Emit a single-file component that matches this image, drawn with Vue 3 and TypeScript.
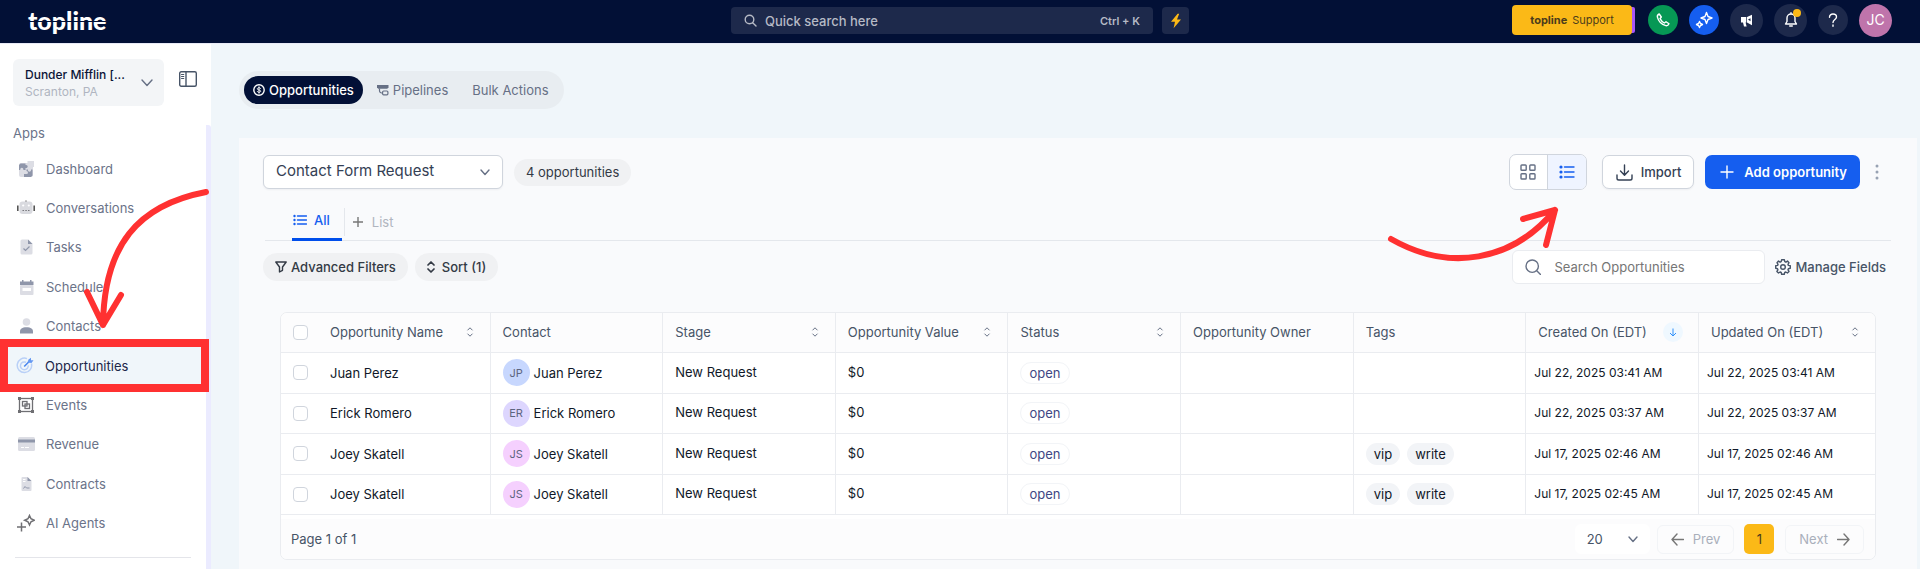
<script setup lang="ts">
import { ref } from 'vue'

interface NavItem { id: string; label: string }
interface Column { label: string; sort?: 'both' | 'down' }
interface Row { name: string; initials: string; tone: string; tags: string[]; date: string }

const nav: NavItem[] = [
  { id: 'dashboard', label: 'Dashboard' },
  { id: 'conversations', label: 'Conversations' },
  { id: 'tasks', label: 'Tasks' },
  { id: 'scheduler', label: 'Scheduler' },
  { id: 'contacts', label: 'Contacts' },
  { id: 'opportunities', label: 'Opportunities' },
  { id: 'events', label: 'Events' },
  { id: 'revenue', label: 'Revenue' },
  { id: 'contracts', label: 'Contracts' },
  { id: 'agents', label: 'AI Agents' },
]

const columns: Column[] = [
  { label: 'Contact' },
  { label: 'Stage', sort: 'both' },
  { label: 'Opportunity Value', sort: 'both' },
  { label: 'Status', sort: 'both' },
  { label: 'Opportunity Owner' },
  { label: 'Tags' },
  { label: 'Created On (EDT)', sort: 'down' },
  { label: 'Updated On (EDT)', sort: 'both' },
]

const rows: Row[] = [
  { name: 'Juan Perez', initials: 'JP', tone: 'blue', tags: [], date: 'Jul 22, 2025 03:41 AM' },
  { name: 'Erick Romero', initials: 'ER', tone: 'violet', tags: [], date: 'Jul 22, 2025 03:37 AM' },
  { name: 'Joey Skatell', initials: 'JS', tone: 'pink', tags: ['vip', 'write'], date: 'Jul 17, 2025 02:46 AM' },
  { name: 'Joey Skatell', initials: 'JS', tone: 'pink', tags: ['vip', 'write'], date: 'Jul 17, 2025 02:45 AM' },
]

const quick = ref('')
const query = ref('')
</script>

<template>
  <div class="app">
    <header class="topbar">
      <a class="logo" href="#">topline</a>
      <div class="top-center">
        <label class="quick">
          <svg width="13" height="13" viewBox="0 0 13 13" class="line"><circle cx="5.5" cy="5.5" r="4.3" /><path d="M8.7 8.7 12 12" /></svg>
          <input v-model="quick" type="text" placeholder="Quick search here" aria-label="Quick search" />
          <kbd>Ctrl + K</kbd>
        </label>
        <button class="bolt" aria-label="Quick actions">
          <svg width="12" height="16" viewBox="0 0 12 16"><path d="M7.600.8 1 8.800h4L3.600 15.200 11 6.600H7L9.200.8Z" fill="#fbb917" /></svg>
        </button>
      </div>
      <div class="top-right">
        <button class="support"><b>topline</b> Support</button>
        <button class="round green" aria-label="Call">
          <svg width="14" height="14" viewBox="0 0 14 14" class="line"><path d="M3.200 1C2 1.600 1 2.600 1.400 4.200c1 4 4.300 7.300 8.400 8.400 1.600.4 2.600-.6 3.200-1.800L10 8.700 8.300 10C6.400 9 5 7.600 4 5.700L5.300 4Z" /></svg>
        </button>
        <button class="round blue" aria-label="AI assistant">
          <svg width="18" height="18" viewBox="0 0 18 18" class="line"><path d="M11.500 1.500 13 5.500 17 7 13 8.500 11.500 12.500 10 8.500 6 7 10 5.500ZM4.500 10.500 5.500 12.500 7.500 13.500 5.500 14.500 4.500 16.500 3.500 14.500 1.500 13.500 3.500 12.500Z" /></svg>
        </button>
        <button class="round large" aria-label="Announcements">
          <svg width="13" height="13" viewBox="0 0 13 13" fill="#fff"><path d="M12 .8v10.400L7 8.500V3ZM1 3h5.300v5.400H5.600l1 4H4L3 8.400H1Z" /><path d="M8 5.600 10.500 4.200v3Z" fill="#1d294b" /></svg>
        </button>
        <button class="round large bell" aria-label="Notifications">
          <svg width="14" height="16" viewBox="0 0 14 16" class="line"><path d="M1.500 12h11L11 9.500V6a4 4 0 0 0-8 0v3.500ZM7 2V.8M5.700 14h2.600" /></svg>
        </button>
        <button class="round" aria-label="Help">
          <svg width="10" height="14" viewBox="0 0 10 14" class="line"><path d="M1.500 4.200C1.500 2.200 3 1 5 1s3.500 1.200 3.500 3C8.500 6.500 5 6.500 5 9.500M5 12v1.200" /></svg>
        </button>
        <button class="round large avatar-me">JC</button>
      </div>
    </header>

    <div class="body">
      <aside class="sidebar">
        <div class="side-head">
          <button class="location">
            <span class="loc-text"><strong>Dunder Mifflin [...</strong><small>Scranton, PA</small></span>
            <svg width="12" height="8" viewBox="0 0 12 8" class="line"><path d="m1 1 5 5.500L11 1" /></svg>
          </button>
          <button class="collapse" aria-label="Collapse sidebar">
            <svg width="18" height="16" viewBox="0 0 18 16" class="line"><rect x=".7" y=".7" width="16.600" height="14.600" rx="1.500" /><path d="M7 1v14" /><path d="M2.500 3.500h2.300M2.500 5.500h2.300M2.500 7.500h2.300" stroke-width="1" /></svg>
          </button>
        </div>
        <nav class="nav">
          <h2>Apps</h2>
          <ul>
            <li v-for="item in nav" :key="item.id" :class="{ active: item.id === 'opportunities' }">
              <a href="#">
                <svg class="nav-icon" width="18" height="18" viewBox="0 0 18 18">
                  <g v-if="item.id === 'dashboard'"><rect x="2" y="3" width="14" height="14" rx="2" fill="#dcdde4" /><path d="M10.500 1H17v6h-5V5.500h-1.500Z" fill="#dcdde4" /><path d="M3.500 3.500h5V5a1.600 1.600 0 1 1 0 3v2H6.300a1.600 1.600 0 1 0-3 0H2V5ZM9.500 9.500H11a1.600 1.600 0 1 0 3 0h1.500v6L14 17H7v-3h2.500a1.500 1.500 0 0 0 0-3Z" fill="#8f96aa" /></g>
                  <g v-else-if="item.id === 'conversations'"><path d="M9 1.500v2" stroke="#555" stroke-width="1.200" /><rect x="2.500" y="2.500" width="13" height="12.500" rx="3" fill="#d9dadf" /><path d="M.8 6.500v5.500M17.200 6.500v5.500" stroke="#555" stroke-width="1.600" /><circle cx="6.200" cy="6.500" r="1.100" fill="#fff" /><circle cx="11.800" cy="6.500" r="1.100" fill="#fff" /><path d="M5.500 11.500H7M8.300 11.500h1.500M11 11.500h1.500" stroke="#77777c" /></g>
                  <g v-else-if="item.id === 'tasks'"><path d="M5 1.500h6l4.500 4.300V15a1.500 1.500 0 0 1-1.500 1.500H5A1.500 1.500 0 0 1 3.500 15V3A1.500 1.500 0 0 1 5 1.500Z" fill="#dcdde4" /><path d="M11 1.500 15.500 6H11Z" fill="#8f96aa" /><path d="m6.500 10.500 2 2 4-4" fill="none" stroke="#8f96aa" stroke-width="1.200" /></g>
                  <g v-else-if="item.id === 'scheduler'"><rect x="3" y="7" width="13.500" height="10" rx="1" fill="#dcdde4" /><path d="M3 3.500h2V2h1.500v1.500H13V2h1.500v1.500h2V7H3Z" fill="#8f96aa" /><path d="M5.500 10H14v3H5.500Z" fill="#fff" /></g>
                  <g v-else-if="item.id === 'contacts'"><circle cx="9.500" cy="5" r="3.800" fill="#dcdde4" /><path d="M3 16.500v-2C3 12 5 10.300 9.500 10.300S16 12 16 14.500v2Z" fill="#8f96aa" /></g>
                  <g v-else-if="item.id === 'opportunities'" fill="none" stroke="#b9d0f7" stroke-width="1.500"><path d="M11 1.600A7.200 7.200 0 1 0 15.400 6.500" /><path d="M10 5.300a3.900 3.900 0 1 0 2.200 3" /><path d="m8.200 9.500 5-5" stroke="#4a86ee" stroke-width="1.600" /><path d="m11.500 5.500 1-3L15 .8v2.500h2.500L15.500 6Z" fill="#6498f2" stroke="none" /></g>
                  <g v-else-if="item.id === 'events'" fill="none" stroke="#6f6f73"><rect x="2.500" y="2.500" width="13" height="13" stroke-width="1.300" /><path d="M1 1h3v3H1ZM14 1h3v3h-3ZM1 14h3v3H1ZM14 14h3v3h-3Z" fill="#6f6f73" stroke="none" /><rect x="5.500" y="5.500" width="4.500" height="4.500" stroke-width="1.300" /><rect x="8" y="8" width="4.500" height="4.500" stroke-width="1.300" /></g>
                  <g v-else-if="item.id === 'revenue'"><rect x="1" y="2" width="17" height="14" rx="1.500" fill="#dcdde4" /><path d="M1 4.500h17v3H1Z" fill="#8f96aa" /><path d="M4 12.500h3M8 12.500h4" stroke="#fff" /></g>
                  <g v-else-if="item.id === 'contracts'"><path d="M5.500 2h5l4 4v9a1 1 0 0 1-1 1h-8a1 1 0 0 1-1-1V3a1 1 0 0 1 1-1Z" fill="#dcdde4" /><path d="M10.500 2v4h4Z" fill="#8f96aa" /><path d="M6 4.500h2.500M6 6.500h2.500" stroke="#fff" /><path d="M6.500 13.500 8 11.500l1.500 1.500h3" fill="none" stroke="#8f96aa" /></g>
                  <g v-else fill="none" stroke="#6f6f73" stroke-width="1.500"><path d="M12.500 1.500 14 4.800 17.300 6.300 14 7.800 12.500 11 11 7.800 7.700 6.300 11 4.800ZM4.500 8.500v9M0 13h9" /></g>
                </svg>
                {{ item.label }}
              </a>
            </li>
          </ul>
          <svg class="arrow arrow-nav" width="130" height="144" viewBox="0 0 130 144"><path d="M126 7C58 20 24 60 23 140M7 107 23 140 41 110" /></svg>
        </nav>
      </aside>

      <main class="main">
        <div class="pills">
          <button class="pill on">
            <svg width="12" height="12" viewBox="0 0 12 12" class="line"><circle cx="6" cy="6" r="5.200" /><path d="M7.600 4.500C7.300 3.900 6.700 3.700 6 3.700c-2.200 0-2.200 2.100 0 2.300 2.200.2 2.200 2.300 0 2.300-.8 0-1.400-.3-1.700-.9M6 2.800v6.400" stroke-width="1" /></svg>
            Opportunities
          </button>
          <button class="pill">
            <svg width="12" height="12" viewBox="0 0 12 12"><path d="M0 1h11.500v2.200L10.300 4.700H1.200L0 3.200Z" fill="#667085" /><path d="M2.500 4.500v2.300a2.200 2.200 0 0 0 2.200 2.200H6" fill="none" stroke="#667085" stroke-width="1.200" /><rect x="5.600" y="7" width="5.300" height="3.800" rx="1" fill="none" stroke="#667085" stroke-width="1.200" /></svg>
            Pipelines
          </button>
          <button class="pill">Bulk Actions</button>
        </div>

        <section class="panel">
          <div class="toolbar">
            <span class="select pipeline">
              <select aria-label="Pipeline"><option>Contact Form Request</option></select>
              <svg width="10" height="7" viewBox="0 0 10 7" class="line"><path d="m1 1 4 4.500L9 1" /></svg>
            </span>
            <span class="count">4 opportunities</span>
            <div class="toggle">
              <button aria-label="Board view"><svg width="16" height="16" viewBox="0 0 16 16" class="line"><rect x="1" y="1" width="5.200" height="5.200" rx=".8" /><rect x="9.800" y="1" width="5.200" height="5.200" rx=".8" /><rect x="1" y="9.800" width="5.200" height="5.200" rx=".8" /><rect x="9.800" y="9.800" width="5.200" height="5.200" rx=".8" /></svg></button>
              <button class="on" aria-label="List view"><svg width="16" height="14" viewBox="0 0 16 14" class="line"><path d="M5.500 2H15M5.500 7H15M5.500 12H15" /><g fill="currentColor" stroke="none"><circle cx="2" cy="2" r="1.600" /><circle cx="2" cy="7" r="1.600" /><circle cx="2" cy="12" r="1.600" /></g></svg></button>
            </div>
            <button class="import">
              <svg width="17" height="17" viewBox="0 0 17 17" class="line"><path d="M8.500 1v10M4.500 7l4 4.200 4-4.200M1 11v3.200A1.800 1.800 0 0 0 2.800 16h11.400a1.800 1.800 0 0 0 1.800-1.800V11" /></svg>
              Import
            </button>
            <button class="add">
              <svg width="14" height="14" viewBox="0 0 14 14" class="line"><path d="M7 1v12M1 7h12" /></svg>
              Add opportunity
            </button>
            <button class="more" aria-label="More"><svg width="4" height="16" viewBox="0 0 4 16" fill="#98a2b3"><circle cx="2" cy="2" r="1.500" /><circle cx="2" cy="8" r="1.500" /><circle cx="2" cy="14" r="1.500" /></svg></button>
          </div>

          <div class="tabs">
            <button class="tab on">
              <svg width="14" height="12" viewBox="0 0 14 12" class="line"><path d="M4.500 2h9M4.500 6h9M4.500 10h9" /><g fill="currentColor" stroke="none"><circle cx="1.500" cy="2" r="1.200" /><circle cx="1.500" cy="6" r="1.200" /><circle cx="1.500" cy="10" r="1.200" /></g></svg>
              All
            </button>
            <button class="tab add-list">
              <svg width="10" height="10" viewBox="0 0 10 10" class="line"><path d="M5 0v10M0 5h10" /></svg>
              List
            </button>
          </div>

          <div class="filters">
            <button class="chip">
              <svg width="12" height="12" viewBox="0 0 12 12" class="line"><path d="M.8 1h10.400L7.500 6v3.300L4.500 11V6Z" /></svg>
              Advanced Filters
            </button>
            <button class="chip sort">
              <svg width="8" height="12" viewBox="0 0 8 12" class="line"><path d="m1 4 3-3 3 3M1 8l3 3 3-3" stroke-width="1.700" /></svg>
              Sort (1)
            </button>
            <label class="search">
              <svg width="16" height="16" viewBox="0 0 16 16" class="line"><circle cx="7.200" cy="7.200" r="6.200" /><path d="m12 12 3.500 3.500" /></svg>
              <input v-model="query" type="text" placeholder="Search Opportunities" aria-label="Search Opportunities" />
            </label>
            <button class="manage">
              <svg width="16" height="16" viewBox="0 0 16 16" class="line"><path d="M6.600.8h2.800l.4 1.900 1.100.5L12.500 2.100l1.500 1.600-1 1.700.4 1 1.900.4v2.500l-1.900.4-.4 1.100 1 1.600-1.600 1.600-1.600-1-1.100.4-.4 1.900H6.600l-.4-1.900-1.100-.4-1.600 1-1.600-1.600 1-1.600-.4-1.100L.7 9.300V6.800l1.900-.4.4-1L2 3.700l1.500-1.600 1.600 1.100 1.100-.5Z" /><circle cx="8" cy="8" r="2.300" /></svg>
              Manage Fields
            </button>
          </div>

          <div class="card">
            <table>
              <colgroup><col class="c-name" /><col v-for="c in columns" :key="c.label" :class="c.label.startsWith('Updated') ? 'c-last' : 'c-std'" /></colgroup>
              <thead>
                <tr>
                  <th scope="col"><div class="cell"><input type="checkbox" aria-label="Select all" /><span>Opportunity Name</span>
                    <svg class="sorter" width="8" height="10" viewBox="0 0 8 10"><path d="m1.500 3.300 2.500-2.500 2.500 2.500M1.500 6.700 4 9.200l2.500-2.500" /></svg></div></th>
                  <th v-for="c in columns" :key="c.label" scope="col">
                    <div class="cell"><span>{{ c.label }}</span>
                      <svg v-if="c.sort === 'both'" class="sorter" width="8" height="10" viewBox="0 0 8 10"><path d="m1.500 3.300 2.500-2.500 2.500 2.500M1.500 6.700 4 9.200l2.500-2.500" /></svg>
                      <i v-else-if="c.sort" class="sorted"><svg width="8" height="9" viewBox="0 0 8 9"><path d="M4 .5v7.500M1 5l3 3 3-3" /></svg></i>
                    </div>
                  </th>
                </tr>
              </thead>
              <tbody>
                <tr v-for="(r, i) in rows" :key="i">
                  <td><div class="cell"><input type="checkbox" :aria-label="'Select ' + r.name" /><span>{{ r.name }}</span></div></td>
                  <td><div class="cell contact"><i class="avatar" :class="r.tone">{{ r.initials }}</i><span>{{ r.name }}</span></div></td>
                  <td class="high">New Request</td>
                  <td class="high">$0</td>
                  <td><span class="status">open</span></td>
                  <td></td>
                  <td><div class="cell tags"><span v-for="t in r.tags" :key="t" class="tag">{{ t }}</span></div></td>
                  <td class="when">{{ r.date }}</td>
                  <td class="when">{{ r.date }}</td>
                </tr>
              </tbody>
            </table>
            <footer class="pager">
              <span class="page-of">Page 1 of 1</span>
              <span class="select size">
                <select aria-label="Rows per page"><option>20</option></select>
                <svg width="10" height="7" viewBox="0 0 10 7" class="line"><path d="m1 1 4 4.500L9 1" /></svg>
              </span>
              <button class="step"><svg width="13" height="13" viewBox="0 0 13 13" class="line"><path d="M12.500 6.500H1M6 1 1 6.500 6 12" /></svg>Prev</button>
              <button class="current">1</button>
              <button class="step">Next<svg width="13" height="13" viewBox="0 0 13 13" class="line"><path d="M.5 6.500H12M7 1l5 5.500L7 12" /></svg></button>
            </footer>
          </div>
          <svg class="arrow arrow-view" width="176" height="60" viewBox="0 0 176 60"><path d="M6 35C64 68 127 58 170 6M138 15 170 6 161 41" /></svg>
        </section>
      </main>
    </div>
  </div>
</template>

<style>
body { margin: 0; background: #fff; }
</style>

<style scoped>
.app { font-family: Inter, "Liberation Sans", sans-serif; font-size: 13px; line-height: 20px; color: #101828; }
.app * { box-sizing: border-box; }
button, input, select { font: inherit; color: inherit; margin: 0; padding: 0; border: 0; background: none; }
button { display: inline-flex; align-items: center; white-space: nowrap; flex: none; }
a { text-decoration: none; color: inherit; }
i { font-style: normal; }
svg { flex: none; display: block; }
.line { fill: none; stroke: currentColor; stroke-width: 1.4; stroke-linecap: round; stroke-linejoin: round; }

.topbar { display: grid; grid-template-columns: 1fr auto 1fr; align-items: center; height: 43px; padding: 0 28px; background: #021036; }
.logo { position: relative; justify-self: start; padding-bottom: 3px; font-family: Lato, Inter, sans-serif; font-weight: 900; font-size: 25px; line-height: 24px; color: #fff; }
.logo::after { content: ""; position: absolute; left: 0; right: 0; top: 13px; height: 1px; background: #021036; }
.top-center { display: flex; gap: 9px; padding-bottom: 2px; }
.quick { display: flex; align-items: center; gap: 8px; width: 422px; height: 27px; padding: 0 13px; border-radius: 4px; background: #1d294b; color: #b6bac5; font-weight: 500; }
.quick input { flex: 1; min-width: 0; outline: 0; }
.quick input::placeholder { color: #b6bac5; opacity: 1; }
.quick kbd { font: inherit; font-size: 11px; font-weight: 600; }
.bolt { justify-content: center; width: 27px; height: 27px; border-radius: 4px; background: #1d294b; }
.top-right { display: flex; align-items: center; justify-content: flex-end; gap: 11px; padding-bottom: 3px; }
.support { position: relative; justify-content: center; gap: 5px; width: 120px; height: 30px; margin-right: 5px; border-radius: 4px; background: #fbb917; box-shadow: 5px 0 0 -2px #a855f7; color: #4b3c1c; font-size: 11px; }
.round { position: relative; justify-content: center; width: 30px; height: 30px; border-radius: 50%; background: #1d294b; color: #fff; }
.round.large { width: 33px; height: 33px; }
.round.green { background: #069855; }
.round.blue { background: #155eef; }
.bell::after { content: ""; position: absolute; top: 5px; right: 6px; width: 8px; height: 8px; border-radius: 50%; background: #fbb917; }
.round.avatar-me { background: #bf74ab; font-size: 14px; }

.body { display: flex; background: #f0f6fa; border-top: 1px solid #e8eaf6; }
.sidebar { display: flex; flex-direction: column; flex: none; width: 211px; background: #fff; }
.side-head { display: flex; align-items: flex-start; gap: 15px; height: 81px; padding: 15px 13px 0; }
.location { justify-content: space-between; width: 151px; height: 47px; padding: 0 11px 0 12px; border-radius: 6px; background: #f3f5f7; color: #667085; text-align: left; }
.loc-text { display: grid; font-size: 12px; line-height: 17px; }
.loc-text strong { font-weight: 500; color: #0b1437; }
.loc-text small { font-size: 12px; color: #b0b5c1; }
.collapse { margin-top: 12px; color: #475467; }
.nav { position: relative; display: flex; flex-direction: column; flex: 1; border-right: 5px solid #ebebff; border-top-right-radius: 3px; color: #6b7389; }
.nav h2 { margin: 0; padding: 0 13px; font-size: 13px; font-weight: 400; line-height: 17px; }
.nav ul { display: grid; grid-auto-rows: 1fr; flex: 1; margin: 7px 0 11px; padding: 0 0 15px; list-style: none; position: relative; }
.nav ul::after { content: ""; position: absolute; left: 15px; right: 15px; bottom: 0; height: 1px; background: #e4e5ea; }
.nav li { display: flex; }
.nav a { display: flex; align-items: center; gap: 11px; flex: 1; padding-left: 17px; }
.nav li.active { position: relative; background: #f0f6fa; color: #1c2749; }
.nav li.active a { padding-left: 16px; }
.nav li.active::after { content: ""; position: absolute; inset: -7px -3px -7px 0; border: 8px solid #ff3131; }
.arrow { position: absolute; fill: none; stroke: #ff3131; stroke-width: 6; stroke-linecap: round; stroke-linejoin: round; pointer-events: none; }
.arrow-nav { left: 80px; top: 60px; }
.arrow-view { right: 356px; top: 66px; }

.main { flex: 1; min-width: 0; padding: 27px 3px 0 28px; }
.pills { display: inline-flex; align-items: center; height: 38px; padding: 0 5px; border-radius: 19px; background: #e8edf1; color: #667085; vertical-align: top; }
.pill { gap: 4px; height: 28px; padding: 0 10px 0 14px; }
.pill.on { padding: 0 9px; border-radius: 14px; background: #021036; color: #fff; font-weight: 500; }
.panel { position: relative; margin-top: 29px; padding: 16px 24px 9px; background: #f9fafc; }
.toolbar { display: flex; align-items: center; height: 36px; }
.select { position: relative; display: flex; align-items: center; }
.select select { width: 100%; height: 100%; appearance: none; outline: 0; }
.select svg { position: absolute; right: 12px; color: #667085; pointer-events: none; }
.pipeline { width: 240px; height: 34px; border: 1px solid #d0d5dd; border-radius: 6px; background: #fff; box-shadow: 0 1px 2px #1018280d; font-size: 15px; color: #344054; }
.pipeline select { padding: 0 12px 2px; }
.count { margin-left: 11px; padding: 3px 12px 4px; border-radius: 14px; background: #f0f1f3; color: #333a45; }
.toggle { display: flex; margin-left: auto; width: 78px; height: 36px; border: 1px solid #d0d5dd; border-radius: 7px; background: #fff; overflow: hidden; color: #667085; }
.toggle button { flex: 1; justify-content: center; }
.toggle .on { border-left: 1px solid #d0d5dd; background: #eff4ff; color: #155eef; }
.import, .add { height: 34px; border-radius: 7px; font-weight: 500; }
.import { gap: 8px; margin-left: 15px; padding: 0 12px 0 13px; border: 1px solid #d0d5dd; background: #fff; box-shadow: 0 1px 2px #1018280d; color: #344054; }
.add { gap: 10px; margin-left: 11px; padding: 0 13px 0 15px; background: #155eef; color: #fff; font-weight: 600; }
.more { margin: 0 14px 0 15px; }
.tabs { display: flex; align-items: stretch; height: 33px; margin: 18px 2px 0; padding-left: 27px; border-bottom: 1px solid #e4e7ec; }
.tab { gap: 7px; padding: 0 12px 10px 1px; color: #b0b5bf; }
.tab.on { height: 33px; padding-bottom: 7px; border-bottom: 3px solid #004eeb; color: #155eef; font-weight: 500; }
.add-list { gap: 9px; height: 28px; margin-left: 2px; padding: 0 0 0 8px; border-left: 1px solid #e4e7ec; }
.add-list svg { color: #777; }
.filters { display: flex; align-items: center; height: 34px; margin-top: 9px; }
.chip { gap: 4px; height: 28px; margin-right: 7px; padding: 0 12px; border-radius: 14px; background: #f0f1f3; color: #333a45; font-weight: 500; }
.chip.sort { gap: 7px; }
.search { display: flex; align-items: center; gap: 14px; width: 253px; height: 34px; margin-left: auto; padding: 0 12px; border: 1px solid #eaecf0; border-radius: 6px; background: #fff; color: #667085; }
.search input { flex: 1; min-width: 0; outline: 0; }
.search input::placeholder { color: #757575; opacity: 1; }
.manage { gap: 5px; margin: 0 7px 0 10px; color: #475467; font-weight: 500; }

.card { margin: 28px 17px 0; border: 1px solid #eaecf0; border-radius: 7px; background: #fff; overflow: hidden; }
table { width: 100%; height: 202px; table-layout: fixed; border-collapse: separate; border-spacing: 0; }
.c-name { width: 13.15%; }
.c-std { width: 10.83%; }
th, td { padding: 0 12px; border-right: 1px solid #eaecf0; border-bottom: 1px solid #eaecf0; text-align: left; vertical-align: middle; white-space: nowrap; font-weight: 400; }
th { height: 40px; padding-bottom: 1px; background: #fcfcfd; color: #475467; }
th:last-child, td:last-child { border-right: 0; }
.cell { display: flex; align-items: center; }
.cell input { appearance: none; flex: none; width: 15px; height: 15px; margin-right: 22px; border: 1px solid #d0d5dd; border-radius: 4px; background: #fff; }
.sorter { margin: 0 4px 0 auto; fill: none; stroke: #667085; }
.sorted { display: grid; place-items: center; width: 20px; height: 20px; margin: 0 3px 0 auto; border-radius: 50%; background: #eff8ff; }
.sorted svg { fill: none; stroke: #2e90fa; }
.cell.contact { gap: 4px; }
.avatar { display: grid; place-items: center; width: 27px; height: 27px; border-radius: 50%; font-size: 11px; color: #5d6580; }
.avatar.blue { background: #c7d7fe; }
.avatar.violet { background: #ddd6fe; }
.avatar.pink { background: #f5d0fe; }
td.high { padding-bottom: 2px; }
.status { display: inline-block; padding: 0 8px; border: 1px solid #f2f4f7; border-radius: 11px; color: #3e4784; vertical-align: middle; }
.cell.tags { gap: 7px; }
.tag { padding: 1px 8px; border-radius: 11px; background: #f2f4f7; }
td.when { padding: 0 8px; font-size: 12px; }
.pager { display: flex; align-items: center; height: 40px; margin-top: 4px; padding: 0 11px 0 10px; background: #fcfcfd; color: #475467; }
.page-of { margin-right: auto; }
.size { width: 75px; height: 30px; border-radius: 6px; background: #fff; }
.size select { padding-left: 12px; }
.step { gap: 9px; height: 29px; margin-left: 7px; padding: 0 13px; border: 1px solid #f2f4f7; border-radius: 6px; color: #a9afbb; }
.step svg { color: #777; }
.current { justify-content: center; width: 30px; height: 30px; margin: 0 4px 0 10px; border-radius: 5px; background: #fbb917; color: #4b3c1c; }
</style>
